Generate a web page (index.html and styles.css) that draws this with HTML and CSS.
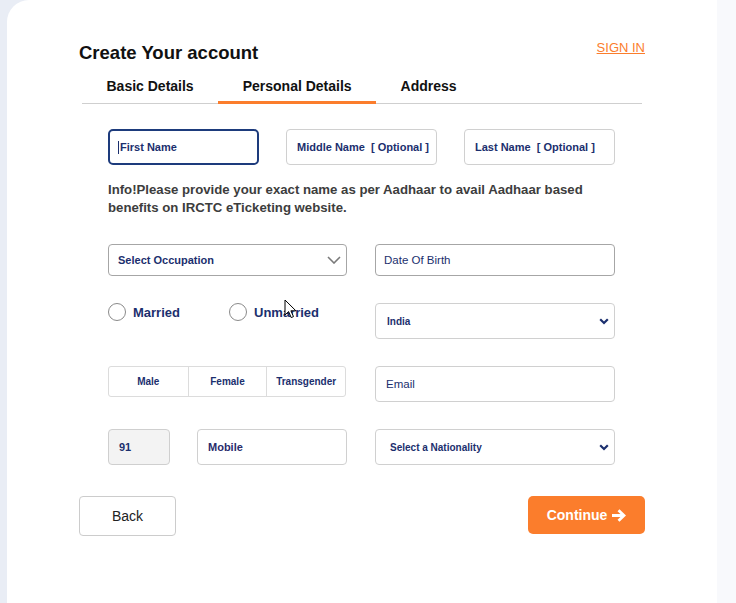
FILE: index.html
```html
<!DOCTYPE html>
<html lang="en">
<head>
<meta charset="utf-8">
<title>Create Your account</title>
<link rel="stylesheet" href="styles.css">
</head>
<body>
<div class="page">
  <div class="gutter"></div>
  <main class="card">
    <header class="head">
      <h1 class="title">Create Your account</h1>
      <a class="signin" href="#">SIGN IN</a>
    </header>
    <nav class="tabs">
      <span class="tab">Basic Details</span>
      <span class="tab active">Personal Details</span>
      <span class="tab">Address</span>
    </nav>
    <form class="form">
      <div class="row3">
        <div class="field focus"><span class="caret"></span>First Name</div>
        <div class="field">Middle Name&nbsp; [ Optional ]</div>
        <div class="field">Last Name&nbsp; [ Optional ]</div>
      </div>
      <p class="info">Info!Please provide your exact name as per Aadhaar to avail Aadhaar based benefits on IRCTC eTicketing website.</p>
      <div class="row2">
        <div class="field short dark occ">Select Occupation
          <svg class="chev-g" width="14" height="8" viewBox="0 0 14 8"><path d="M1 1l6 6 6-6" fill="none" stroke="#7a7a7a" stroke-width="1.6"/></svg>
        </div>
        <div class="field short dark plain">Date Of Birth</div>
      </div>
      <div class="row2">
        <div class="radios">
          <label class="radio r1"><span class="circle"></span>Married</label>
          <label class="radio"><span class="circle"></span>Unmarried</label>
        </div>
        <div class="field sel">India
          <svg class="chev-n" width="10" height="7" viewBox="0 0 10 7"><path d="M1.2 1.2l3.8 3.8 3.8-3.8" fill="none" stroke="#1b2f6e" stroke-width="2.2"/></svg>
        </div>
      </div>
      <div class="row2">
        <div class="seg">
          <span class="opt">Male</span>
          <span class="opt">Female</span>
          <span class="opt">Transgender</span>
        </div>
        <div class="field plain em">Email</div>
      </div>
      <div class="row2">
        <div class="phone">
          <div class="field code">91</div>
          <div class="field mobile">Mobile</div>
        </div>
        <div class="field sel nat">Select a Nationality
          <svg class="chev-n" width="10" height="7" viewBox="0 0 10 7"><path d="M1.2 1.2l3.8 3.8 3.8-3.8" fill="none" stroke="#1b2f6e" stroke-width="2.2"/></svg>
        </div>
      </div>
    </form>
    <div class="actions">
      <button class="back" type="button">Back</button>
      <button class="continue" type="button">Continue
        <svg width="15" height="13" viewBox="0 0 15 13"><path d="M1 6.5h10" stroke="#fff" stroke-width="3"/><path d="M7.5 1.2l5.5 5.3-5.5 5.3" fill="none" stroke="#fff" stroke-width="2.8"/></svg>
      </button>
    </div>
    <svg class="cursor" width="13" height="20" viewBox="0 0 13 20"><path d="M1 1v15l3.6-3.4 2.6 6 2.3-1-2.6-5.8h5z" fill="#fff" stroke="#000" stroke-width="1"/></svg>
  </main>
  <div class="rstrip"></div>
</div>
</body>
</html>
```

FILE: styles.css
```css
* { box-sizing: border-box; }
html, body { margin: 0; padding: 0; }
body {
  font-family: "Liberation Sans", Arial, sans-serif;
  background: #e9edf5;
}
.page {
  display: flex;
  height: 603px;
  overflow: hidden;
}
.gutter { width: 7px; flex: none; }
.card {
  position: relative;
  width: 710px;
  flex: none;
  background: #fff;
  border-top-left-radius: 22px;
  padding: 43px 72px 0 72px;
}
.rstrip { flex: 1; background: #f8f9fc; }

.head {
  display: flex;
  justify-content: space-between;
  align-items: flex-start;
}
.title {
  margin: 0;
  font-size: 18.5px;
  line-height: 20px;
  font-weight: 700;
  color: #111;
}
.signin {
  margin-top: -3px;
  font-size: 13px;
  line-height: 16px;
  color: #fb7d2c;
  text-decoration: underline;
}

.tabs {
  display: flex;
  margin: 15px 3px 0 3px;
  border-bottom: 1px solid #cfcfcf;
}
.tab {
  padding: 0 24.5px 7px 24.5px;
  font-size: 14px;
  line-height: 16px;
  font-weight: 700;
  color: #111;
  border-bottom: 3px solid transparent;
  margin-bottom: -1px;
}
.tab.active { border-bottom-color: #fb7d2c; }

.form {
  margin-top: 25px;
  padding-left: 29px;
  width: 536px;
}
.row3 {
  display: grid;
  grid-template-columns: 151px 151px 151px;
  column-gap: 27px;
}
.row2 {
  display: grid;
  grid-template-columns: 239px 240px;
  column-gap: 28px;
  align-items: start;
  margin-top: 27px;
}

.field {
  height: 36px;
  border: 1px solid #d0d0d0;
  border-radius: 4px;
  display: flex;
  align-items: center;
  padding: 0 10px;
  font-size: 11px;
  font-weight: 700;
  color: #1b2f6e;
  white-space: nowrap;
}
.field.focus {
  border: 2px solid #1d3b7c;
  border-radius: 5px;
  padding-left: 8px;
}
.caret {
  width: 1px;
  height: 13px;
  background: #1b2f6e;
  margin-right: 1px;
}
.field.short { height: 32px; }
.field.dark { border-color: #a6a6a6; }
.occ { padding-left: 9px; padding-right: 5px; }
.chev-g { margin-left: auto; }
.field.plain {
  font-weight: 400;
  font-size: 11.5px;
  padding-left: 8px;
}
.field.em { padding-left: 10px; }
.field.sel {
  font-size: 10px;
  padding-left: 11px;
  padding-right: 5px;
}
.field.nat { padding-left: 14px; }
.chev-n { margin-left: auto; }

.info {
  margin: 16px 0 0 0;
  font-size: 13.2px;
  line-height: 18px;
  font-weight: 700;
  color: #3d3d3d;
  width: 495px;
}

.radios {
  display: flex;
  align-items: center;
  height: 18px;
}
.radio {
  display: flex;
  align-items: center;
  font-size: 13px;
  font-weight: 700;
  color: #1b2f6e;
}
.radio.r1 { width: 121px; }
.circle {
  width: 18px;
  height: 18px;
  border: 1px solid #8a8a8a;
  border-radius: 50%;
  margin-right: 7px;
  background: #fff;
}

.seg {
  width: 238px;
  height: 31px;
  border: 1px solid #dcdcdc;
  border-radius: 3px;
  display: grid;
  grid-template-columns: 1fr 1fr 1fr;
}
.opt {
  display: flex;
  align-items: center;
  justify-content: center;
  font-size: 10px;
  font-weight: 700;
  color: #1b2f6e;
}
.opt + .opt { border-left: 1px solid #dcdcdc; }

.phone {
  display: flex;
  gap: 27px;
}
.field.code {
  width: 62px;
  background: #f3f3f3;
  border-color: #cfcfcf;
}
.field.mobile { width: 150px; color: #2a2c6c; }

.actions {
  display: flex;
  justify-content: space-between;
  align-items: flex-start;
  margin-top: 31px;
}
.back {
  width: 97px;
  height: 40px;
  background: #fff;
  border: 1px solid #cccccc;
  border-radius: 4px;
  font-family: inherit;
  font-size: 14px;
  color: #222;
}
.continue {
  width: 117px;
  height: 38px;
  background: #fb7d2c;
  border: none;
  border-radius: 5px;
  font-family: inherit;
  font-size: 14px;
  font-weight: 700;
  color: #fff;
  display: flex;
  align-items: center;
  justify-content: center;
  gap: 4px;
}

.cursor {
  position: absolute;
  left: 277px;
  top: 299px;
}
```
